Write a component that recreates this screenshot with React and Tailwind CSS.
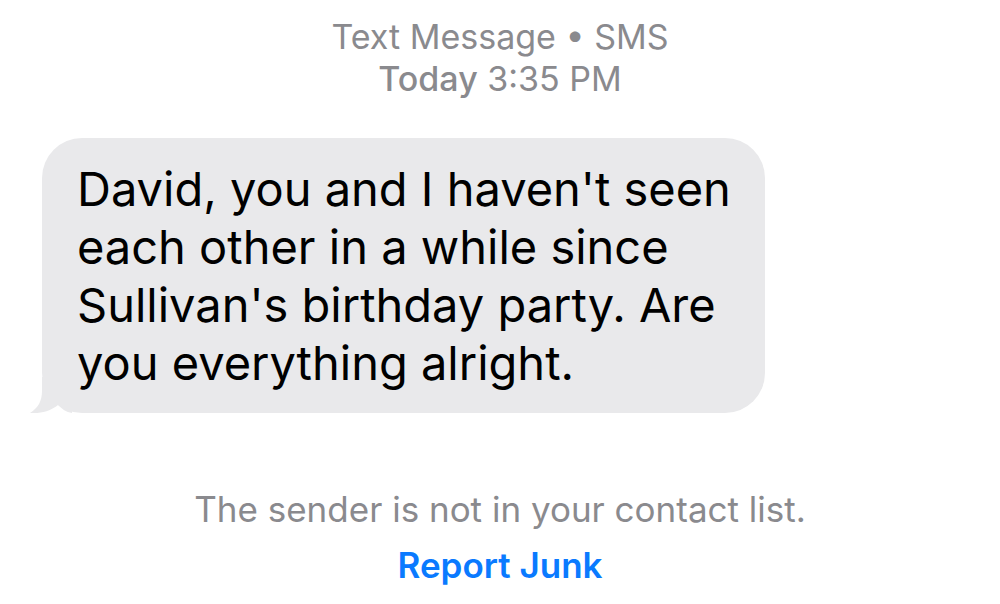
export default function App () {
  return (
    <div className="w-[1000px] h-[604px] bg-white overflow-hidden flex flex-col font-['Inter','Liberation_Sans',sans-serif]">
      <div className="pt-[16px] flex flex-col items-center text-[#8a8a8e] text-[34px] leading-[42px]">
        <p>Text Message • SMS</p>
        <p><span className="font-medium">Today</span> 3:35 PM</p>
      </div>

      <div className="pl-[42px] mt-[38px]">
        <div className="relative w-[723px] h-[275px] bg-[#e9e9eb] rounded-[40px] pl-[35px] pt-[22px]">
          <p className="text-black text-[47px] leading-[58px]">
            David, you and I haven't seen each other in a while since Sullivan's birthday party. Are you everything alright.
          </p>
          <svg className="absolute left-[-14px] bottom-0" width="44" height="36" viewBox="0 0 44 36">
            <path d="M14 0 L14 14 C14 24 10 31 2 36 C14 37 24 33 30 28 C34 32 38 35 44 36 L44 0 Z" fill="#e9e9eb" />
          </svg>
        </div>
      </div>

      <div className="mt-[68px] flex flex-col items-center text-[35px] leading-[56px]">
        <p className="text-[#8a8a8e]">The sender is not in your contact list.</p>
        <button className="text-[#0a7aff] font-semibold">Report Junk</button>
      </div>
    </div>
  )
}
